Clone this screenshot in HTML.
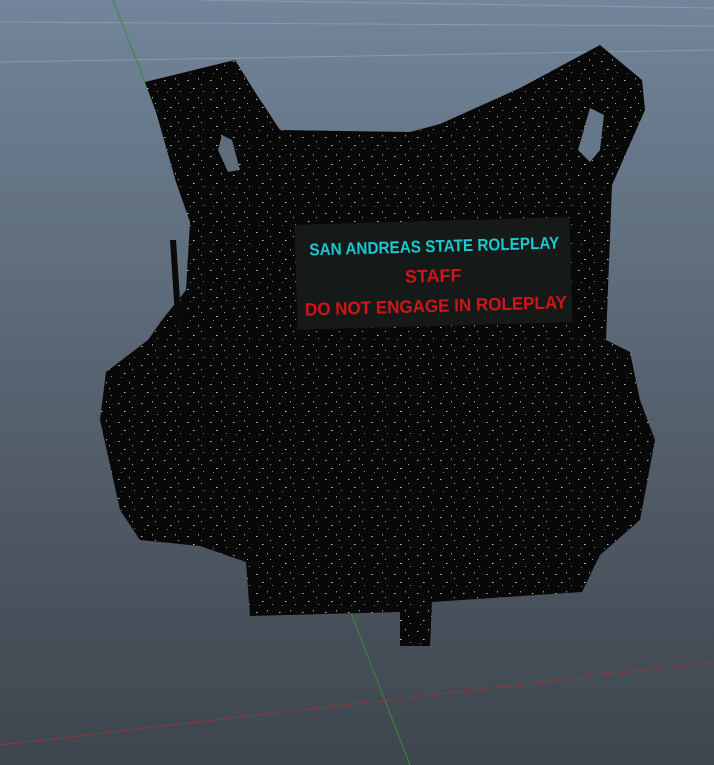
<!DOCTYPE html>
<html><head><meta charset="utf-8"><style>
html,body{margin:0;padding:0;width:714px;height:765px;overflow:hidden;background:#555f6b}
</style></head><body>
<svg width="714" height="765" viewBox="0 0 714 765" xmlns="http://www.w3.org/2000/svg">
<defs>
<linearGradient id="bg" x1="0" y1="0" x2="0" y2="1">
<stop offset="0" stop-color="#72859a"/>
<stop offset="0.45" stop-color="#5a6674"/>
<stop offset="1" stop-color="#3e454d"/>
</linearGradient>
<pattern id="sp" width="23" height="19" patternUnits="userSpaceOnUse">
<rect width="23" height="19" fill="#080808"/>
<rect x="3" y="4" width="1.5" height="1" fill="#bbb"/>
<rect x="14" y="2" width="1" height="1.5" fill="#999"/>
<rect x="9" y="12" width="1.5" height="1" fill="#ccc"/>
<rect x="19" y="15" width="1" height="1" fill="#888"/>
<rect x="6" y="16" width="1" height="1" fill="#777"/>
<rect x="17" y="8" width="1" height="1" fill="#aaa"/>
</pattern>
</defs>
<rect width="714" height="765" fill="url(#bg)"/>
<line x1="0" y1="22" x2="714" y2="26" stroke="#8c99a8" stroke-width="1"/>
<line x1="0" y1="62" x2="714" y2="50" stroke="#8c99a8" stroke-width="1"/>
<line x1="200" y1="0" x2="714" y2="8" stroke="#8c99a8" stroke-width="1"/>
<line x1="113" y1="0" x2="410" y2="765" stroke="#3a8a3a" stroke-width="1"/>
<line x1="0" y1="745" x2="714" y2="662" stroke="#8a3a3a" stroke-width="1"/>
<polygon fill="url(#sp)" points="145,82 235,60 255,92 280,130 410,132 440,124 520,88 600,45 642,80 645,110 612,185 606,340 630,352 640,400 655,440 640,520 600,555 582,592 432,602 430,646 400,646 400,612 250,616 246,562 200,546 140,540 120,510 100,420 106,372 148,340 162,320 186,290 190,222 176,182 156,112"/>
<polygon fill="#5f6c7a" points="222,135 232,140 240,170 228,172 218,150"/>
<polygon fill="#66778a" points="590,108 604,115 600,150 590,162 578,150"/>
<polygon fill="#0a0a0a" points="170,240 176,240 182,330 176,332"/>
<g transform="rotate(-1.6 433 272)">
<rect x="296" y="221" width="275" height="105" fill="#151a18"/>
<text x="310" y="252" textLength="250" lengthAdjust="spacingAndGlyphs" font-family="Liberation Sans, sans-serif" font-weight="bold" font-size="17" fill="#19c8d2">SAN ANDREAS STATE ROLEPLAY</text>
<text x="433" y="282" text-anchor="middle" font-family="Liberation Sans, sans-serif" font-weight="bold" font-size="18" fill="#d0141a">STAFF</text>
<text x="304" y="312" textLength="262" lengthAdjust="spacingAndGlyphs" font-family="Liberation Sans, sans-serif" font-weight="bold" font-size="18" fill="#d0141a">DO NOT ENGAGE IN ROLEPLAY</text>
</g>
</svg>
</body></html>
